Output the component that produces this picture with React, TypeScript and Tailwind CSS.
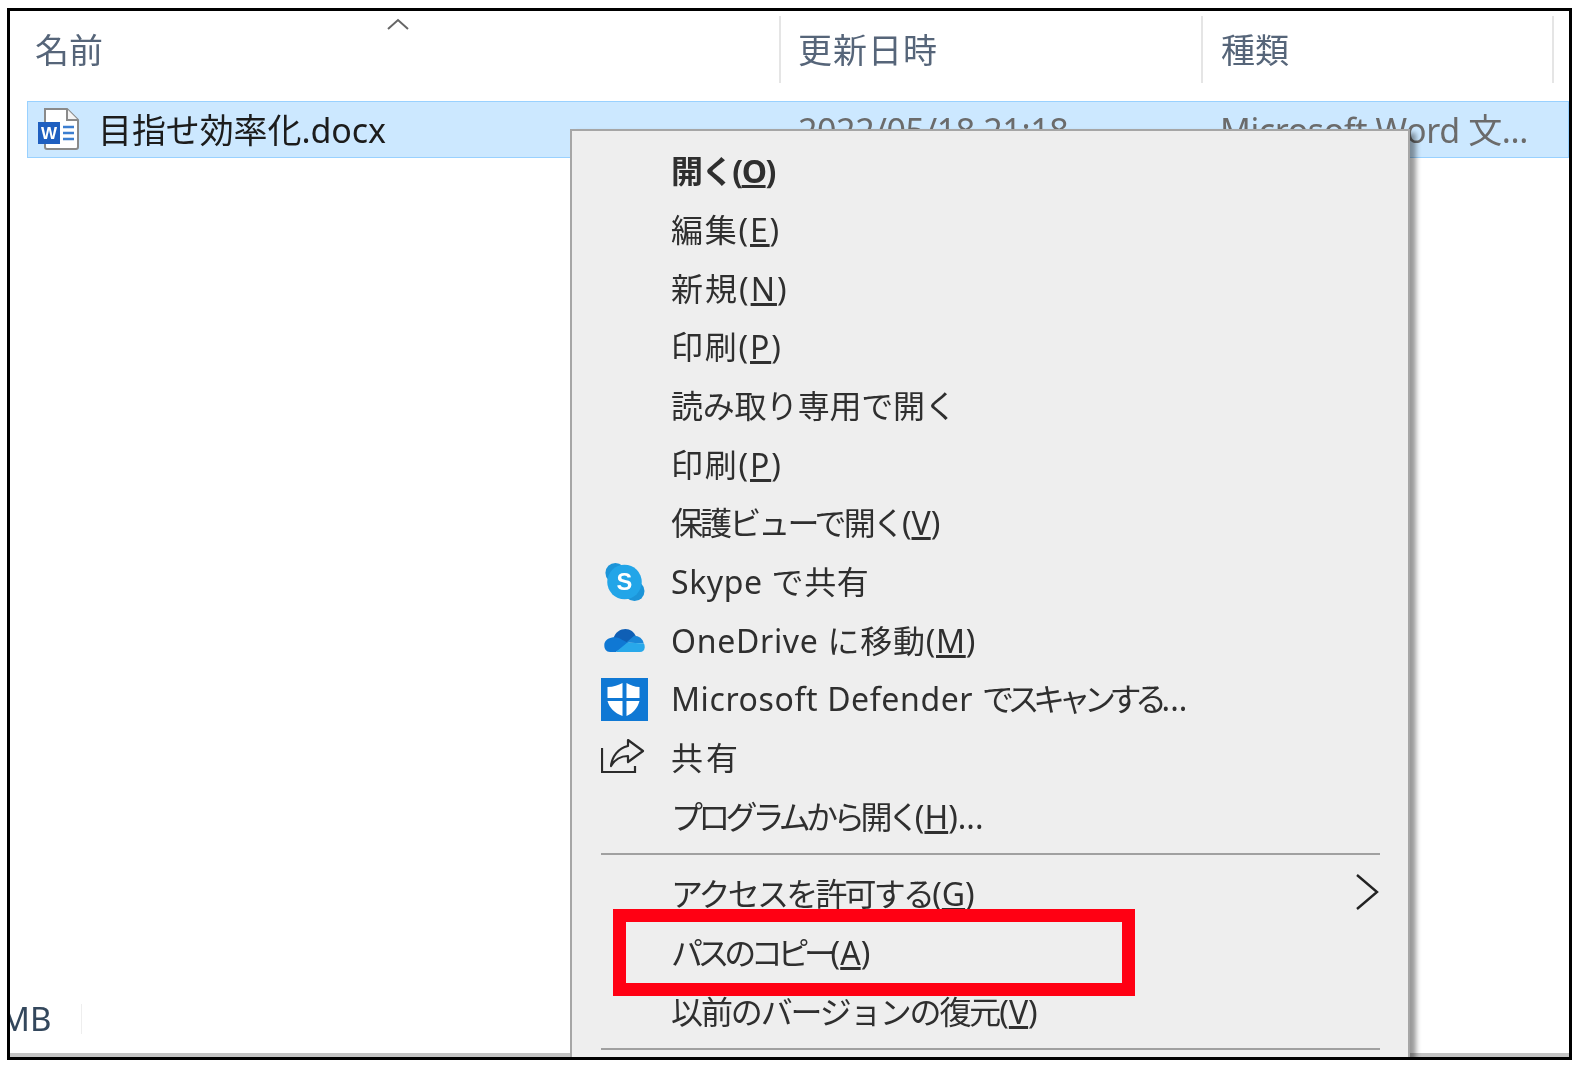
import type React from 'react'

const fontStack = 'font-["Noto_Sans","Noto_Sans_CJK_JP",sans-serif]'

interface MenuRow {
  label: React.ReactNode
  icon?: React.ReactNode
}

function Key({ k }: { k: string }): React.JSX.Element {
  return (
    <>
      (<u className="underline-offset-2">{k}</u>)
    </>
  )
}

function WordIcon(): React.JSX.Element {
  return (
    <svg width="44" height="46" viewBox="0 0 44 44" className="mb-[3px] shrink-0">
      <path d="M7 2h22l11 11v27a2 2 0 0 1-2 2H9a2 2 0 0 1-2-2z" fill="#fff" stroke="#8a8a8a" strokeWidth="2" />
      <path d="M29 2v11h11" fill="#f4f4f4" stroke="#8a8a8a" strokeWidth="2" />
      <rect x="0" y="15" width="22" height="22" fill="#1f5fc0" />
      <text x="11" y="32" textAnchor="middle" fontSize="17" fontWeight="700" fill="#fff" fontFamily="Liberation Sans">
        W
      </text>
      <path d="M25 20h11M25 26h11M25 32h11" stroke="#3b7ed0" strokeWidth="2.4" />
    </svg>
  )
}

function SkypeIcon(): React.JSX.Element {
  return (
    <svg width="43" height="40" viewBox="0 0 46 44" className="ml-[2px]">
      <circle cx="13" cy="12" r="11" fill="#1c94d8" />
      <circle cx="34" cy="32" r="11" fill="#1c94d8" />
      <circle cx="23" cy="22" r="19" fill="#22a5e8" />
      <text x="23" y="31" textAnchor="middle" fontSize="26" fontWeight="700" fill="#fff" fontFamily="Liberation Sans">
        S
      </text>
    </svg>
  )
}

function OneDriveIcon(): React.JSX.Element {
  return (
    <svg width="41" height="25" viewBox="0 0 42 26" className="ml-[3px]">
      <path d="M9 12C11 4 17 1 22 1c5 0 9 3 11 8l-12 9z" fill="#0f5fb5" />
      <path d="M31 8c5 0 9 3 10 8l-18-1z" fill="#1a87d8" />
      <path d="M8 10c3-1 7 0 10 2l8 4-14 9H6c-4 0-6-3-6-7 0-4 3-7 8-8z" fill="#0f78d4" />
      <path d="M12 25l12-10 17 1c1 1 1 3 1 4 0 3-2 5-5 5z" fill="#28a8ea" />
    </svg>
  )
}

function DefenderIcon(): React.JSX.Element {
  return (
    <svg width="47" height="43" viewBox="0 0 47 43">
      <rect width="47" height="43" fill="#0f78d4" />
      <path d="M25.500 5c4 2 8 4 13 4v11h-13zM21.500 5c-4 2-9 4-15 4v11h15zM6.500 23h15v15c-8-3-13-8-15-15zM25.500 23h13c-2 7-6 12-13 15z" fill="#fff" />
    </svg>
  )
}

function ShareIcon(): React.JSX.Element {
  return (
    <svg width="44" height="36" viewBox="0 0 44 36" fill="none" stroke="#2b2b2b" strokeWidth="2.200" className="mb-[3px]">
      <path d="M1 10v24h33v-6" />
      <path d="M27 2l15 11-15 11v-6c-7 0-13 3-17 10 1-9 7-18 17-20z" strokeLinejoin="round" />
    </svg>
  )
}

const topRows: MenuRow[] = [
  { label: <span className="font-bold tracking-[-1.4px]">開く<Key k="O" /></span> },
  { label: <span className="tracking-[1.8px]">編集<Key k="E" /></span> },
  { label: <span className="tracking-[2px]">新規<Key k="N" /></span> },
  { label: <span className="tracking-[1.8px]">印刷<Key k="P" /></span> },
  { label: <span className="tracking-[-0.3px]">読み取り専用で開く</span> },
  { label: <span className="tracking-[1.8px]">印刷<Key k="P" /></span> },
  { label: <><span className="tracking-[-2.9px]">保護ビューで開く</span><Key k="V" /></> },
  { label: <span className="tracking-[0.6px]">Skype で共有</span>, icon: <SkypeIcon /> },
  { label: <span className="tracking-[0.7px]">OneDrive に移動<Key k="M" /></span>, icon: <OneDriveIcon /> },
  {
    label: (
      <>
        <span className="tracking-[0.6px]">Microsoft Defender </span>
        <span className="tracking-[-6.5px]">でスキャンする</span>
        <span className="ml-[1px]">...</span>
      </>
    ),
    icon: <DefenderIcon />,
  },
  { label: <span className="tracking-[3px]">共有</span>, icon: <ShareIcon /> },
  { label: <><span className="tracking-[-4.8px]">プログラムから開く</span><Key k="H" />...</> },
]

const bottomRows: MenuRow[] = [
  { label: <><span className="tracking-[-2.8px]">アクセスを許可する</span><Key k="G" /></> },
  { label: <><span className="tracking-[-5.4px]">パスのコピー</span><Key k="A" /></> },
  { label: <><span className="tracking-[-2.1px]">以前のバージョンの復元</span><Key k="V" /></> },
]

function Row({ row }: { row: MenuRow }): React.JSX.Element {
  return (
    <div className="flex h-[58.67px] items-center">
      <div className="flex w-[70px] shrink-0 items-center">{row.icon}</div>
      <div className="flex-1 whitespace-nowrap">{row.label}</div>
    </div>
  )
}

function ContextMenu(): React.JSX.Element {
  return (
    <div className="absolute top-[118px] left-[560px] h-[1000px] w-[840px] border-2 border-[#a6a6a6] bg-[#eeeeee] pt-[11px] pr-[28px] pl-[29px] text-[32px] leading-none text-[#2f2f2f] shadow-[6px_4px_5px_rgba(0,0,0,0.4)]">
      {topRows.map((row, i) => (
        <Row key={i} row={row} />
      ))}
      <div className="h-[19px] pt-[7px]">
        <div className="h-[2px] w-full bg-[#a0a0a0]" />
      </div>
      <div className="relative">
        {bottomRows.map((row, i) => (
          <Row key={i} row={row} />
        ))}
        <svg width="26" height="38" viewBox="0 0 26 38" fill="none" stroke="#222" strokeWidth="2.400" className="absolute top-[8px] right-[0px]">
          <path d="M3 2l20 17L3 36" />
        </svg>
      </div>
      <div className="mt-[7px] h-[2px] w-full bg-[#a0a0a0]" />
    </div>
  )
}

export default function App(): React.JSX.Element {
  return (
    <div className={`h-[1068px] w-[1586px] overflow-hidden bg-white pt-[8px] pl-[7px] ${fontStack}`}>
      <div className="relative flex h-[1052px] w-[1565px] flex-col overflow-hidden border-[3px] border-black bg-white blur-[0.6px]">
        <div className="flex h-[72px] shrink-0 pt-[5px] text-[34px] text-[#566579]">
          <div className="relative flex w-[771px] items-center border-r-2 border-[#e5e5e5] pt-[2px] pl-[25px]">
            <span>名前</span>
            <svg width="24" height="14" viewBox="0 0 24 14" fill="none" stroke="#666" strokeWidth="2" className="absolute top-[1px] left-[376px]">
              <path d="M2 12L12 3l10 9" />
            </svg>
          </div>
          <div className="flex w-[422px] items-center border-r-2 border-[#e5e5e5] pt-[2px] pl-[17px] tracking-[1px]">更新日時</div>
          <div className="flex w-[351px] items-center border-r-2 border-[#e5e5e5] pt-[2px] pl-[18px]">種類</div>
        </div>
        <div className="mt-[18px] ml-[17px] flex h-[57px] shrink-0 items-center border border-[#99d1ff] bg-[#cce8ff] pt-[2px] text-[34px]">
          <div className="flex w-[751px] shrink-0 items-center gap-[16px] pl-[10px] text-[#1c1c1c]">
            <WordIcon />
            <span className="tracking-[-0.1px]">目指せ効率化.docx</span>
          </div>
          <div className="w-[422px] shrink-0 pl-[19px] tracking-[-0.4px] whitespace-nowrap text-[#6b6b6b]">2022/05/18 21:18</div>
          <div className="flex-1 pl-[19px] tracking-[-0.4px] whitespace-nowrap text-[#6b6b6b]">Microsoft Word 文...</div>
        </div>
        <div className="flex flex-1 flex-col justify-end">
          <div className="flex h-[44px] items-center">
            <span className="ml-[-10px] text-[33px] text-[#33475c]">MB</span>
            <div className="ml-[30px] h-[30px] w-px bg-[#eeeeee]" />
          </div>
          <div className="mt-[12px] h-[4px] bg-[#c4c4c4]" />
        </div>
        <ContextMenu />
      </div>
      <div className="absolute top-[909px] left-[613px] h-[87px] w-[522px] border-[13px] border-[#ff0013]" />
    </div>
  )
}
